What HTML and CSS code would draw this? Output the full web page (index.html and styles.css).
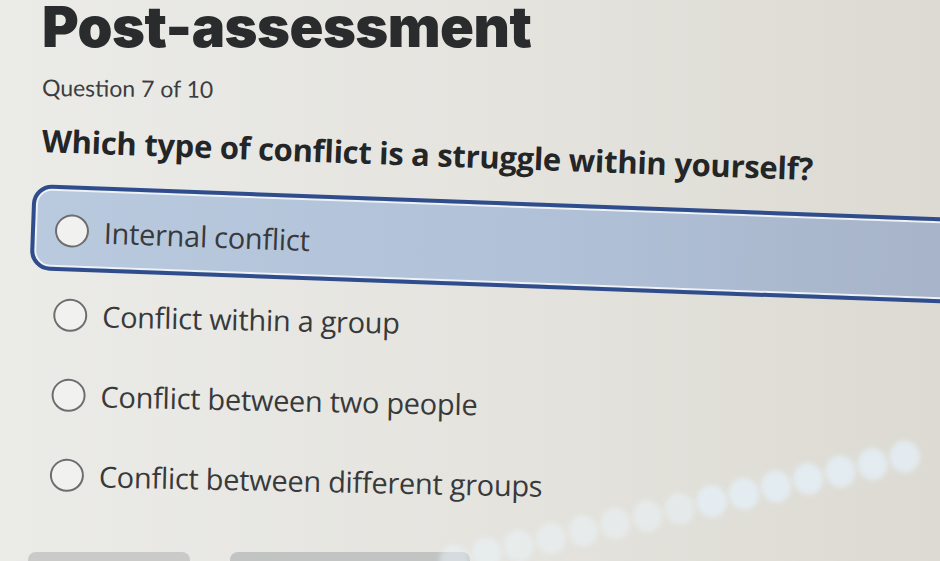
FILE: index.html
```html
<!DOCTYPE html>
<html lang="en">
<head>
    <meta charset="UTF-8">
    <meta name="viewport" content="width=device-width, initial-scale=1.0">
    <title>Post-assessment</title>
    <link rel="stylesheet" href="styles.css">
</head>

<body>
    <div class="page">
        <h1 class="title">Post-assessment</h1>
        <p class="counter">Question 7 of 10</p>
        <p class="question">Which type of conflict is a struggle within yourself?</p>

        <ul class="choices">
            <li class="choice selected">
                <span class="radio"></span>
                <span class="label">Internal conflict</span>
            </li>
            <li class="choice">
                <span class="radio"></span>
                <span class="label">Conflict within a group</span>
            </li>
            <li class="choice">
                <span class="radio"></span>
                <span class="label">Conflict between two people</span>
            </li>
            <li class="choice">
                <span class="radio"></span>
                <span class="label">Conflict between different groups</span>
            </li>
        </ul>

        <div class="actions">
            <button class="btn" type="button" aria-label="Back"></button>
            <button class="btn btn-next" type="button" aria-label="Next"></button>
        </div>

        <!-- glare from the screen photo -->
        <div class="flare">
            <i></i><i></i><i></i><i></i><i></i><i></i><i></i><i></i>
            <i></i><i></i><i></i><i></i><i></i><i></i><i></i>
        </div>
    </div>
</body>

</html>
```

FILE: styles.css
```css
* {
    list-style: none;
    margin: 0;
    padding: 0;
    box-sizing: border-box;
}

body {
    font-family: "Open Sans", Lato, sans-serif;
    color: #333436;
    background: linear-gradient(90deg, #ebebe8 0%, #e5e4df 50%, #dcdad2 100%);
}

.page {
    position: relative;
    height: 561px;
    padding-left: 42px;
    overflow: hidden;
}

.title {
    margin-top: -1px;
    font-family: Inter, sans-serif;
    font-size: 56px;
    line-height: 56px;
    font-weight: 900;
    letter-spacing: -0.5px;
    color: #2a2b2d;
}

.counter {
    margin-top: 17px;
    font-family: Lato, sans-serif;
    font-size: 23px;
    line-height: 30px;
    color: #3c3d3f;
    transform: rotate(0.6deg);
    transform-origin: left center;
}

.question {
    margin-top: 21px;
    font-size: 31px;
    line-height: 35px;
    font-weight: 700;
    letter-spacing: -0.3px;
    color: #242527;
    white-space: nowrap;
    transform: rotate(2.1deg);
    transform-origin: left center;
}

.choices {
    margin: 26px -80px 0 -10px;
    transform: rotate(1.2deg);
    transform-origin: left top;
}

.choice {
    display: flex;
    align-items: center;
    gap: 15px;
    height: 80px;
    padding-left: 24px;
    font-size: 29px;
    letter-spacing: -0.3px;
    color: #38393b;
}

.choice.selected {
    height: 86px;
    margin-bottom: 4px;
    padding: 4px 0 0 20px;
    border: 4px solid #2f4c8c;
    border-radius: 20px;
    background: linear-gradient(90deg, #b9cadf 0%, #b1c2d8 50%, #a5b1c6 100%);
    box-shadow: inset 0 0 0 2px #eef2f6;
    transform: rotate(0.9deg);
    transform-origin: left center;
}

.radio {
    flex: none;
    width: 34px;
    height: 33px;
    border: 2.5px solid #6c6d6f;
    border-radius: 50%;
    background-color: #f1f1ef;
}

.actions {
    display: flex;
    gap: 40px;
    margin: 38px 0 0 -14px;
}

.btn {
    width: 162px;
    height: 44px;
    border: 0;
    border-radius: 8px;
    background-color: #cacac8;
}

.btn-next {
    width: 240px;
    background-color: #c2c4c4;
}

.flare {
    position: absolute;
    left: 440px;
    top: 548px;
    width: 560px;
    display: flex;
    gap: 3px;
    transform: rotate(-13deg);
    transform-origin: left center;
    pointer-events: none;
}

.flare i {
    width: 30px;
    height: 32px;
    border-radius: 50%;
    background-color: rgba(236, 246, 252, 0.45);
    filter: blur(2.5px);
}

.flare i:nth-child(n+9) {
    background-color: rgba(230, 242, 252, 0.7);
}
```
